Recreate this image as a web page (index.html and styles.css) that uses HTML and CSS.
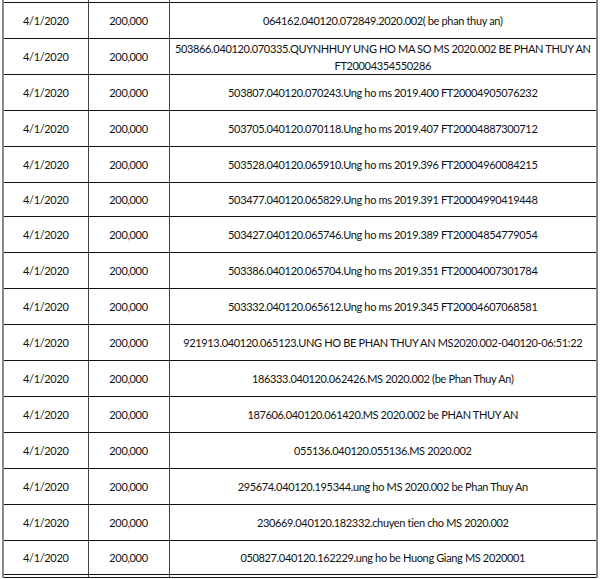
FILE: index.html
```html
<!DOCTYPE html>
<html>
<head>
<meta charset="utf-8">
<link rel="stylesheet" href="styles.css">
</head>
<body>
<table class="sheet">
  <colgroup><col class="c-date"><col class="c-amt"><col class="c-desc"></colgroup>
  <tr class="stub"><td></td><td></td><td></td></tr>
  <tr><td>4/1/2020</td><td>200,000</td><td>064162.040120.072849.2020.002( be phan thuy an)</td></tr>
  <tr><td>4/1/2020</td><td>200,000</td><td>503866.040120.070335.QUYNHHUY UNG HO MA SO MS 2020.002 BE PHAN THUY AN FT20004354550286</td></tr>
  <tr><td>4/1/2020</td><td>200,000</td><td>503807.040120.070243.Ung ho ms 2019.400 FT20004905076232</td></tr>
  <tr><td>4/1/2020</td><td>200,000</td><td>503705.040120.070118.Ung ho ms 2019.407 FT20004887300712</td></tr>
  <tr><td>4/1/2020</td><td>200,000</td><td>503528.040120.065910.Ung ho ms 2019.396 FT20004960084215</td></tr>
  <tr class="short"><td>4/1/2020</td><td>200,000</td><td>503477.040120.065829.Ung ho ms 2019.391 FT20004990419448</td></tr>
  <tr><td>4/1/2020</td><td>200,000</td><td>503427.040120.065746.Ung ho ms 2019.389 FT20004854779054</td></tr>
  <tr><td>4/1/2020</td><td>200,000</td><td>503386.040120.065704.Ung ho ms 2019.351 FT20004007301784</td></tr>
  <tr><td>4/1/2020</td><td>200,000</td><td>503332.040120.065612.Ung ho ms 2019.345 FT20004607068581</td></tr>
  <tr><td>4/1/2020</td><td>200,000</td><td>921913.040120.065123.UNG HO BE PHAN THUY AN MS2020.002-040120-06:51:22</td></tr>
  <tr><td>4/1/2020</td><td>200,000</td><td>186333.040120.062426.MS 2020.002 (be Phan Thuy An)</td></tr>
  <tr><td>4/1/2020</td><td>200,000</td><td>187606.040120.061420.MS 2020.002 be PHAN THUY AN</td></tr>
  <tr><td>4/1/2020</td><td>200,000</td><td>055136.040120.055136.MS 2020.002</td></tr>
  <tr><td>4/1/2020</td><td>200,000</td><td>295674.040120.195344.ung ho MS 2020.002 be Phan Thuy An</td></tr>
  <tr><td>4/1/2020</td><td>200,000</td><td>230669.040120.182332.chuyen tien cho MS 2020.002</td></tr>
  <tr class="short"><td>4/1/2020</td><td>200,000</td><td>050827.040120.162229.ung ho be Huong Giang MS 2020001</td></tr>
  <tr class="stub"><td></td><td></td><td></td></tr>
</table>
</body>
</html>
```

FILE: styles.css
```css
html, body {
  margin: 0;
  padding: 0;
  background: #fff;
  overflow: hidden;
}
.sheet {
  margin-left: 2px;
  width: 596px;
  border-collapse: collapse;
  table-layout: fixed;
  font-family: Lato, "Open Sans", sans-serif;
  font-size: 11px;
  letter-spacing: -0.35px;
  color: #111;
}
.c-date { width: 85px; }
.c-amt { width: 81px; }
.sheet td {
  height: 35px;
  padding: 0 3px;
  text-align: center;
  vertical-align: middle;
  line-height: 17px;
  border-top: 1px solid #111;
  border-bottom: 1px solid #111;
  border-left: 1px solid #444;
  border-right: 1px solid #444;
  box-sizing: content-box;
}
.sheet td:first-child { border-left: 2px solid #888; }
.sheet td:last-child { border-right: 2px solid #888; }
.sheet tr.short td { height: 33px; }
.sheet tr.stub td { height: 2px; padding: 0; border-top: none; }
```
